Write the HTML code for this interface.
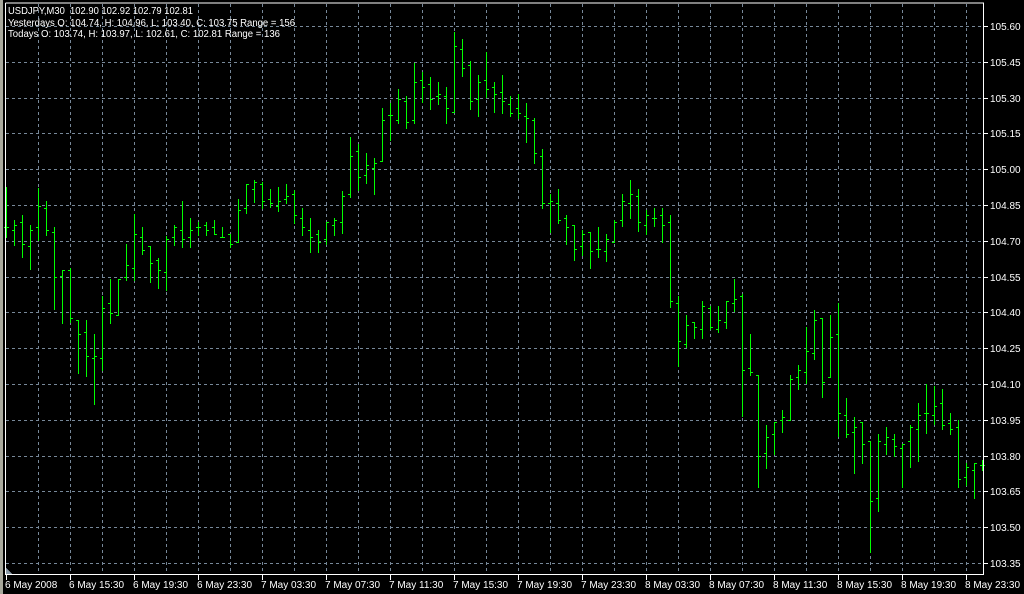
<!DOCTYPE html>
<html><head><meta charset="utf-8"><style>
html,body{margin:0;padding:0;background:#000;width:1024px;height:594px;overflow:hidden}
svg{display:block}
text{font-family:"Liberation Sans",sans-serif;font-size:10px;fill:#fff;white-space:pre}
</style></head><body>
<svg id="c" width="1024" height="594" xmlns="http://www.w3.org/2000/svg" shape-rendering="crispEdges">
<rect x="0" y="0" width="3" height="594" fill="#a8a89c"/>
<g id="grid" stroke="#778899" stroke-width="1" stroke-dasharray="3,3" fill="none"></g>
<path id="bars" stroke="#00ff00" stroke-width="1" fill="none"/>
<g stroke="#fff" stroke-width="1" fill="none">
<path d="M5.5 3V574.5H983.5V3H5.5"/>
<path id="ticks" d=""/>
</g>
<polygon points="6,568 6,574 12,574" fill="#8a9aa8"/>
<text x="8" y="14" xml:space="preserve" textLength="185" lengthAdjust="spacingAndGlyphs">USDJPY,M30  102.90 102.92 102.79 102.81</text>
<text x="8" y="26" textLength="287" lengthAdjust="spacingAndGlyphs">Yesterdays O: 104.74, H: 104.96, L: 103.40, C: 103.75 Range = 156</text>
<text x="8" y="37" textLength="272" lengthAdjust="spacingAndGlyphs">Todays O: 103.74, H: 103.97, L: 102.61, C: 102.81 Range = 136</text>
<g id="labels"></g>
</svg>
<script>
var ns="http://www.w3.org/2000/svg";
var d=[
[6,187,237,227,227],[14,220,245,230,225],[22,215,257,222,244],[30,225,269,246,230],[38,188,240,227,206],[46,201,235,208,230],[54,227,309,232,277],[62,270,323,276,270],[70,268,322,270,318],[78,320,373,320,334],[86,320,376,332,356],[94,334,404,358,356],[102,296,370,358,308],[110,279,323,303,313],[118,279,315,315,279],[126,244,280,277,265],[134,214,280,268,234],[142,227,254,237,250],[150,246,282,246,263],[158,258,288,260,270],[166,236,290,272,239],[174,225,245,237,227],[182,201,247,230,239],[190,218,247,237,230],
[198,222,235,227,227],[206,222,235,225,230],[214,220,234,227,234],[222,227,237,237,237],[230,234,247,234,244],[238,199,242,242,210],[246,184,213,208,184],[254,180,202,189,182],[262,182,208,184,201],[270,189,207,199,203],[278,187,211,206,201],[286,184,203,199,196],[294,190,223,194,215],[302,208,235,218,227],[310,218,252,230,237],[318,230,252,234,242],[326,222,244,239,222],[334,218,235,225,220],[342,191,233,222,196],[350,137,197,194,156],[358,144,190,151,177],[366,153,183,175,165],[374,158,194,168,163],[382,108,161,161,120],[390,103,140,115,115],
[398,89,123,120,99],[406,96,128,101,122],[414,63,123,120,82],[422,72,102,80,87],[430,77,109,84,99],[438,82,104,96,94],[446,87,123,96,108],[454,32,112,112,46],[462,39,76,49,68],[470,61,109,65,101],[478,75,116,99,82],[486,52,97,80,89],[494,82,112,87,94],[502,75,113,92,101],[510,96,116,104,113],[518,94,118,108,113],[526,103,142,116,118],[534,118,163,120,153],[542,149,208,156,203],[550,194,232,203,201],[558,189,223,203,220],[566,215,244,218,227],[574,225,260,225,249],[582,230,255,246,234],[590,232,268,232,251],
[598,227,257,249,249],[606,234,261,251,239],[614,220,242,242,222],[622,194,226,220,201],[630,180,218,203,194],[638,189,231,196,222],[646,210,234,225,215],[654,208,226,218,218],[662,208,242,215,225],[670,215,307,222,301],[678,296,366,303,341],[686,315,347,344,325],[694,322,338,322,327],[702,301,338,329,306],[710,306,329,308,327],[718,306,332,329,320],[726,301,328,322,301],[734,279,311,303,299],[742,294,416,296,370],[750,334,375,368,372],[758,375,487,375,456],[766,425,468,453,437],[774,422,454,434,422],[782,410,432,420,417],[790,375,420,420,379],
[798,365,389,377,370],[806,327,383,372,351],[814,310,359,353,320],[822,318,397,318,382],[830,315,377,377,337],[838,303,436,334,413],[846,398,437,415,434],[854,417,473,432,427],[862,422,463,422,444],[870,441,552,441,501],[878,434,511,498,441],[886,427,454,444,437],[894,434,456,439,446],[902,444,487,448,444],[910,425,467,441,427],[918,403,461,429,415],[926,384,433,413,413],[934,386,424,415,406],[942,389,429,403,425],[950,413,434,423,429],[958,420,487,427,479],[966,463,485,477,467],[974,463,498,470,463],[982,460,470,465,465]];
var p="";
d.forEach(function(b){var x=b[0];p+="M"+(x+.5)+" "+b[1]+"V"+(b[2]+1)+"M"+(x-2)+" "+(b[3]+.5)+"h2M"+(x+1)+" "+(b[4]+.5)+"h2";});
document.getElementById("bars").setAttribute("d",p);
var g=document.getElementById("grid"),gp="";
var t="",L=document.getElementById("labels"),h="";
for(var k=0;k<16;k++){var y=Math.round(26+35.8*k);gp+="M6 "+(y+.5)+"H983";t+="M984 "+(y+.5)+"h4";
h+='<text x="990" y="'+(y+4)+'">'+(105.60-0.15*k).toFixed(2)+'</text>';}
for(var k=0;k<30;k++){var x=38+32*k;gp+="M"+(x+.5)+" 4V574";}
var gl=document.createElementNS(ns,"path");gl.setAttribute("d",gp);g.appendChild(gl);
var tl=["6 May 2008","6 May 15:30","6 May 19:30","6 May 23:30","7 May 03:30","7 May 07:30","7 May 11:30","7 May 15:30","7 May 19:30","7 May 23:30","8 May 03:30","8 May 07:30","8 May 11:30","8 May 15:30","8 May 19:30","8 May 23:30"];
for(var i=0;i<16;i++){var x=6+64*i;t+="M"+(x+.5)+" 575v5";h+='<text x="'+(x-1)+'" y="588">'+tl[i]+'</text>';}
document.getElementById("ticks").setAttribute("d",t);
L.innerHTML=h;
</script>
</body></html>
